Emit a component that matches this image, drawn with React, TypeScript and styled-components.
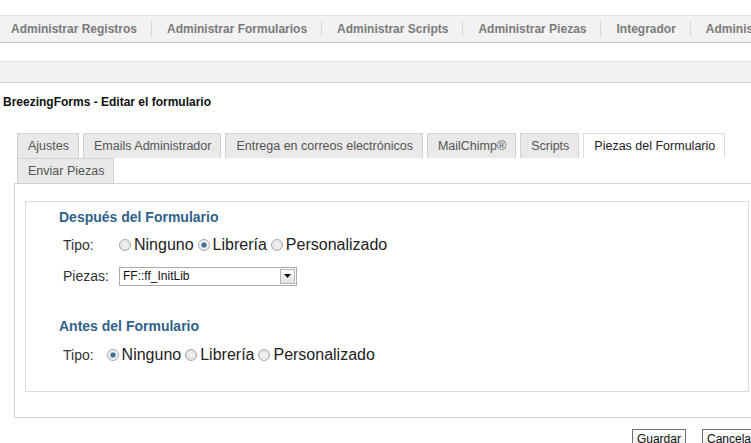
import React from "react";
import styled, { createGlobalStyle } from "styled-components";

const GlobalStyle = createGlobalStyle`
  body {
    margin: 0;
    overflow: hidden;
    background: #fff;
    font-family: "Liberation Sans", Arial, sans-serif;
  }
`;

const Page = styled.div`
  width: 780px;
  padding-top: 15px;
`;

const NavBar = styled.nav`
  display: flex;
  align-items: center;
  height: 26px;
  background: #f2f2f2;
  border-top: 1px solid #e2e2e2;
  border-bottom: 1px solid #c9c9c9;
  white-space: nowrap;
  overflow: hidden;
`;

const NavItem = styled.a`
  font-size: 12px;
  font-weight: bold;
  color: #7a7a7a;
  line-height: 16px;
  padding: 0 14px 0 15px;
  border-left: 1px solid #d6d6d6;
  &:first-child {
    border-left: none;
    padding-left: 11px;
  }
`;

const SubBar = styled.div`
  margin-top: 18px;
  height: 20px;
  background: #f2f2f2;
  border-top: 1px solid #e2e2e2;
  border-bottom: 1px solid #cdcdcd;
`;

const Title = styled.h2`
  margin: 12px 0 0 3px;
  font-size: 12px;
  line-height: 14px;
  font-weight: bold;
  color: #111;
`;

const TabsWrap = styled.div`
  margin: 24px 0 0 14px;
  width: 756px;
`;

const TabList = styled.ul`
  display: flex;
  flex-wrap: wrap;
  column-gap: 4px;
  margin: 0;
  padding: 0 0 0 3px;
  list-style: none;
`;

const Tab = styled.li<{ $active?: boolean }>`
  height: 25px;
  box-sizing: border-box;
  padding: 0 9px 0 10px;
  font-size: 12.5px;
  line-height: 24px;
  color: ${(p) => (p.$active ? "#222" : "#555")};
  background: ${(p) => (p.$active ? "#fff" : "#e9e9e9")};
  border: 1px solid ${(p) => (p.$active ? "#dddddd" : "#d2d2d2")};
  border-bottom: none;
  white-space: nowrap;
`;

const Panel = styled.div`
  border: 1px solid #d2d2d2;
  height: 235px;
  box-sizing: border-box;
  padding: 17px 20px 0 10px;
`;

const Fieldset = styled.div`
  border: 1px solid #dcdcdc;
  height: 191px;
  box-sizing: border-box;
  padding: 5px 20px 0 33px;
`;

const Heading = styled.h3<{ $gap?: number }>`
  margin: ${(p) => p.$gap ?? 0}px 0 0;
  font-size: 14px;
  line-height: 20px;
  font-weight: bold;
  color: #2f6288;
`;

const Row = styled.div<{ $gap: number }>`
  display: flex;
  align-items: center;
  height: 26px;
  margin-top: ${(p) => p.$gap}px;
`;

const Label = styled.span<{ $width?: number }>`
  font-size: 14px;
  color: #333;
  padding-left: 4px;
  width: ${(p) => (p.$width ? `${p.$width}px` : "auto")};
  margin-right: ${(p) => (p.$width ? 0 : 13)}px;
  flex-shrink: 0;
`;

const Radio = styled.span<{ $checked?: boolean }>`
  width: 12px;
  height: 12px;
  box-sizing: border-box;
  border-radius: 50%;
  border: 1px solid #a9a9a9;
  background: ${(p) =>
    p.$checked
      ? "radial-gradient(circle, #3d6f8f 0 2px, #8fb0c6 2.5px, #eef2f5 3.5px)"
      : "radial-gradient(circle, #f4f4f4 0, #dcdcdc 100%)"};
  margin-right: 3px;
  flex-shrink: 0;
`;

const Option = styled.span`
  font-size: 16px;
  color: #222;
  margin-right: 4px;
`;

const Select = styled.div`
  display: flex;
  align-items: center;
  justify-content: space-between;
  width: 178px;
  height: 19px;
  box-sizing: border-box;
  border: 1px solid #a5acb2;
  padding: 0 1px 0 3px;
  font-size: 12px;
  color: #111;
`;

const Arrow = styled.span`
  width: 15px;
  height: 15px;
  box-sizing: border-box;
  border: 1px solid #b5b5b5;
  background: linear-gradient(#fdfdfd, #e2e2e2);
  display: flex;
  align-items: center;
  justify-content: center;
`;

const ButtonRow = styled.div`
  display: flex;
  justify-content: flex-end;
  gap: 16px;
  margin-top: 11px;
  padding-right: 20px;
`;

const Button = styled.button`
  font-family: "Liberation Sans", Arial, sans-serif;
  font-size: 12px;
  color: #111;
  padding: 2px 4px;
  border: 1px solid #707070;
  background: linear-gradient(#ffffff, #ececec);
  border-radius: 0;
`;

const navItems = [
  "Administrar Registros",
  "Administrar Formularios",
  "Administrar Scripts",
  "Administrar Piezas",
  "Integrador",
  "Administrar Menús",
];

const tabs = [
  "Ajustes",
  "Emails Administrador",
  "Entrega en correos electrónicos",
  "MailChimp®",
  "Scripts",
  "Piezas del Formulario",
  "Enviar Piezas",
];

const RadioGroup = ({ selected }: { selected: number }) => (
  <>
    {["Ninguno", "Librería", "Personalizado"].map((o, i) => (
      <React.Fragment key={o}>
        <Radio $checked={i === selected} />
        <Option>{o}</Option>
      </React.Fragment>
    ))}
  </>
);

const App = () => {
  return (
    <Page>
      <GlobalStyle />
      <NavBar>
        {navItems.map((item) => (
          <NavItem key={item}>{item}</NavItem>
        ))}
      </NavBar>
      <SubBar />
      <Title>BreezingForms - Editar el formulario</Title>
      <TabsWrap>
        <TabList>
          {tabs.map((t) => (
            <Tab key={t} $active={t === "Piezas del Formulario"}>
              {t}
            </Tab>
          ))}
        </TabList>
        <Panel>
          <Fieldset>
            <Heading>Después del Formulario</Heading>
            <Row $gap={5}>
              <Label $width={56}>Tipo:</Label>
              <RadioGroup selected={1} />
            </Row>
            <Row $gap={5}>
              <Label $width={56}>Piezas:</Label>
              <Select>
                FF::ff_InitLib
                <Arrow>
                  <svg width="7" height="4" viewBox="0 0 7 4">
                    <path d="M0 0h7L3.5 4z" fill="#111" />
                  </svg>
                </Arrow>
              </Select>
            </Row>
            <Heading $gap={27}>Antes del Formulario</Heading>
            <Row $gap={6}>
              <Label>Tipo:</Label>
              <RadioGroup selected={0} />
            </Row>
          </Fieldset>
        </Panel>
      </TabsWrap>
      <ButtonRow>
        <Button>Guardar</Button>
        <Button>Cancelar</Button>
      </ButtonRow>
    </Page>
  );
};

export default App;
